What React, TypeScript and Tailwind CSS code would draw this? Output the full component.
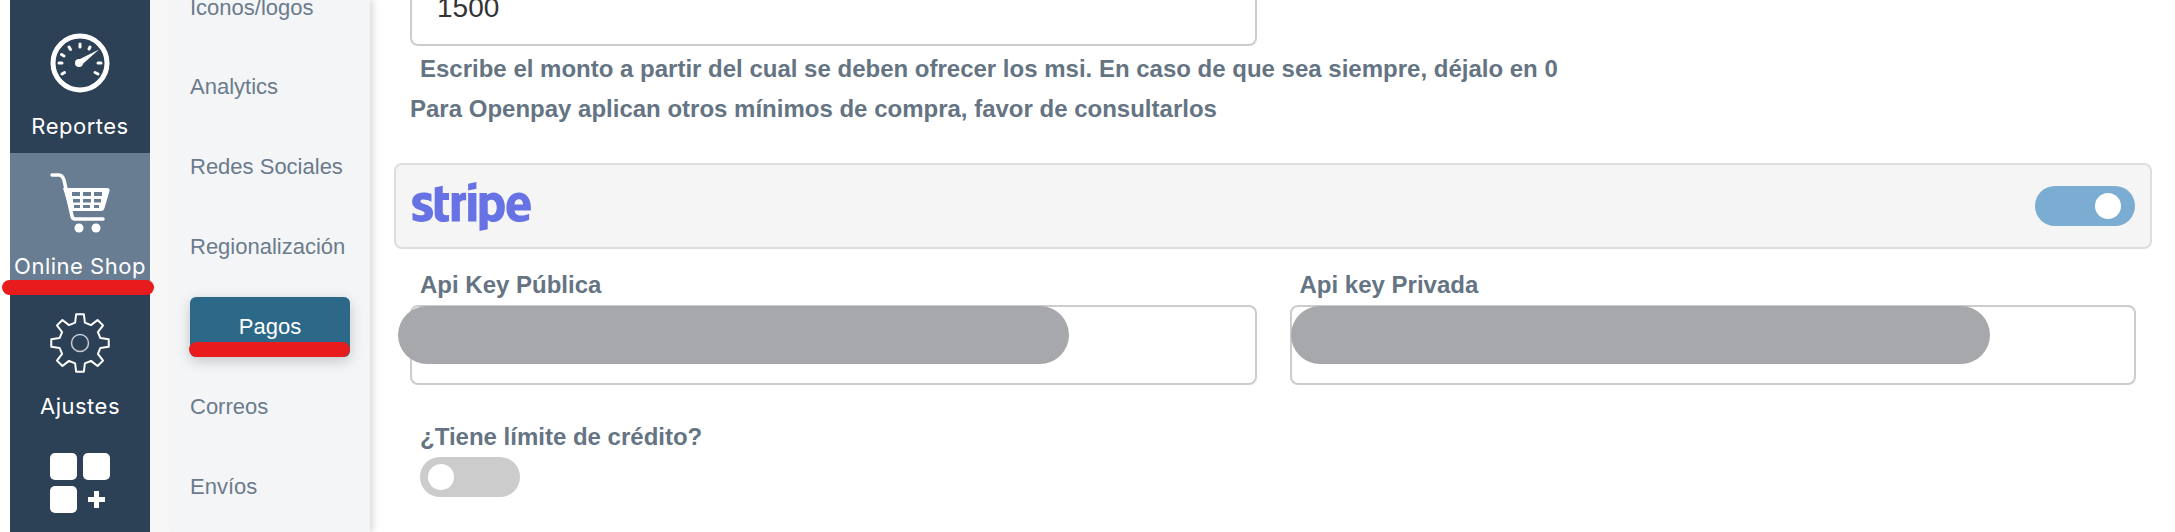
import { FaStripe } from "react-icons/fa";

const Gauge = () => (
  <svg viewBox="0 0 60 60" className="w-[60px] h-[60px]" fill="none">
    <circle cx="30" cy="30" r="27" stroke="white" strokeWidth="5" />
    <g stroke="white" strokeWidth="3" strokeLinecap="round">
      <path d="M30 11v3M19 14l1.500 2.500M11.500 21.500l2.500 1.500M9 30h3M12 41l2.500-1.500M48 41l-3-1.500M48 30h3M40 14l-1 2" />
    </g>
    <circle cx="29" cy="30" r="4" fill="white" />
    <path d="M27 27.500l22-11-18 16z" fill="white" />
  </svg>
);

const Cart = () => (
  <svg viewBox="0 0 60 60" className="w-[60px] h-[60px]" fill="none">
    <path d="M2 2h7c3 0 4 2 5 5l8 36c.4 2 1.500 3 3 3h28" stroke="white" strokeWidth="3.500" strokeLinecap="round" />
    <path d="M13 15h44c2 0 3 1 2.500 3l-5 17c-.5 2-1.500 3-3.500 3H20z" fill="white" />
    <g fill="#697d92">
      <rect x="22" y="19" width="8" height="4" /><rect x="33" y="19" width="8" height="4" /><rect x="44" y="19" width="8" height="4" />
      <rect x="23" y="26" width="7" height="3.500" /><rect x="33" y="26" width="8" height="3.500" /><rect x="44" y="26" width="7" height="3.500" />
      <rect x="24" y="32" width="6" height="3" /><rect x="33" y="32" width="7" height="3" /><rect x="44" y="32" width="5" height="3" />
    </g>
    <circle cx="29" cy="55" r="4.500" fill="white" />
    <circle cx="46" cy="55" r="4.500" fill="white" />
  </svg>
);

const gearPath = (() => {
  const pts: string[] = [];
  const n = 8;
  const w = (Math.PI * 2) / n;
  for (let i = 0; i < n; i++) {
    const a = i * w - Math.PI / 2;
    const p = (r: number, d: number) =>
      `${(30 + r * Math.cos(a + d * w)).toFixed(2)} ${(30 + r * Math.sin(a + d * w)).toFixed(2)}`;
    pts.push(p(21, -0.3), p(29, -0.17), p(29, 0.17), p(21, 0.3));
  }
  return `M${pts.join("L")}Z`;
})();

const Gear = () => (
  <svg viewBox="0 0 60 60" className="w-[60px] h-[60px]" fill="none">
    <path d={gearPath} stroke="white" strokeWidth="2" strokeLinejoin="round" />
    <circle cx="30" cy="30" r="8.500" stroke="#c5ccd3" strokeWidth="1.500" />
  </svg>
);

const Apps = () => (
  <svg viewBox="0 0 60 60" className="w-[60px] h-[60px]" fill="white">
    <rect x="0" y="0" width="27" height="27" rx="5" />
    <rect x="33" y="0" width="27" height="27" rx="5" />
    <rect x="0" y="33" width="27" height="27" rx="5" />
    <path d="M38 44h6v-6h5v6h6v5h-6v6h-5v-6h-6z" />
  </svg>
);

const rail = [
  { id: "reportes", label: "Reportes", icon: <Gauge />, active: false },
  { id: "shop", label: "Online Shop", icon: <Cart />, active: true },
  { id: "ajustes", label: "Ajustes", icon: <Gear />, active: false },
  { id: "apps", label: "", icon: <Apps />, active: false },
];

const sub = ["Analytics", "Redes Sociales", "Regionalización", "Pagos", "Correos", "Envíos"];

const Toggle = ({ on }: { on: boolean }) => (
  <div className={`w-[100px] h-10 rounded-full flex items-center ${on ? "bg-[#7bacd2] justify-end pr-[14px]" : "bg-[#cccccc] justify-start pl-2"}`}>
    <div className="w-[26px] h-[26px] rounded-full bg-white" />
  </div>
);

const KeyField = ({ label, pill, shift }: { label: string; pill: string; shift: string }) => (
  <div className="relative flex-1 min-w-0">
    <div className="pl-[10px] h-[28px] flex items-center text-[24px] font-bold leading-none text-[#657483]">{label}</div>
    <div className="mt-[6px] h-[80px] border-2 border-[#cccccc] rounded-lg bg-white" />
    <div className={`absolute top-[35px] h-[58px] rounded-full bg-[#a7a8ab] ${pill} ${shift}`} />
  </div>
);

export default function App() {
  return (
    <div className="relative flex w-[2175px] h-[532px] overflow-hidden bg-white font-['Liberation_Sans',Arial,sans-serif]">
      <div className="w-[10px] shrink-0 bg-white" />
      <nav className="w-[140px] shrink-0 bg-[#2c4056] pt-[13px] flex flex-col font-['Inter',sans-serif] text-white overflow-hidden">
        {rail.map((r) => (
          <div key={r.id} className={`h-[140px] shrink-0 flex flex-col items-center pt-5 ${r.active ? "bg-[#697d92]" : ""}`}>
            {r.icon}
            {r.label && <span className="mt-[21px] text-[22px] tracking-[0.5px] leading-[24px] whitespace-nowrap">{r.label}</span>}
          </div>
        ))}
      </nav>
      <div className="w-5 shrink-0 bg-[#f7f7f8]" />
      <aside className="w-[200px] shrink-0 bg-[#f4f5f7] px-5 shadow-[4px_0_6px_rgba(0,0,0,0.12)] relative z-10 overflow-hidden">
        <div className="h-[46px] flex items-center text-[22px] text-[#6b7b8c] leading-none">
          <span className="pb-[30px]">Iconos/logos</span>
        </div>
        {sub.map((s) =>
          s === "Pagos" ? (
            <div key={s} className="h-20 pt-[11px]">
              <div className="w-[160px] h-[60px] rounded-md bg-[#2c6888] text-white text-[22px] flex items-center justify-center pb-[1px] shadow-[0_4px_14px_rgba(0,0,0,0.2)]">
                {s}
              </div>
            </div>
          ) : (
            <div key={s} className="h-20 flex items-center text-[22px] text-[#6b7b8c]">{s}</div>
          )
        )}
      </aside>
      <main className="flex-1 min-w-0 pl-6 pr-[23px]">
        <div className="pl-4 pr-[16px]">
          <div className="w-[847px] h-[46px] border-2 border-t-0 border-[#cccccc] rounded-b-lg pl-[25px] text-[28px] leading-none text-[#333333] overflow-hidden">
            <span className="block -mt-[6px]">1500</span>
          </div>
          <p className="pl-[10px] mt-[9px] text-[24px] font-bold leading-[27px] text-[#657483] whitespace-nowrap">
            Escribe el monto a partir del cual se deben ofrecer los msi. En caso de que sea siempre, déjalo en 0
          </p>
          <p className="mt-[13px] text-[24px] font-bold leading-[27px] text-[#657483] whitespace-nowrap">
            Para Openpay aplican otros mínimos de compra, favor de consultarlos
          </p>
        </div>
        <div className="mt-[41px] h-[86px] border-2 border-[#dddddd] rounded-lg bg-[#f5f5f5] flex items-center justify-between pl-4 pr-[15px]">
          <FaStripe className="w-[119px] h-[95px] text-[#6772e5]" />
          <Toggle on />
        </div>
        <div className="mt-[22px] pl-4 pr-[16px] flex gap-[33px]">
          <KeyField label="Api Key Pública" pill="w-[671px]" shift="-left-3" />
          <KeyField label="Api key Privada" pill="w-[699px]" shift="left-px" />
        </div>
        <div className="mt-[39px] pl-[26px]">
          <div className="h-[26px] flex items-center text-[24px] font-bold leading-none text-[#657483]">¿Tiene límite de crédito?</div>
          <div className="mt-[7px]"><Toggle on={false} /></div>
        </div>
      </main>
      <div className="absolute left-[2px] top-[280px] w-[152px] h-[15px] rounded-full bg-[#e81c1c] z-20" />
      <div className="absolute left-[189px] top-[342px] w-[161px] h-[15px] rounded-full bg-[#e81c1c] z-20" />
    </div>
  );
}
